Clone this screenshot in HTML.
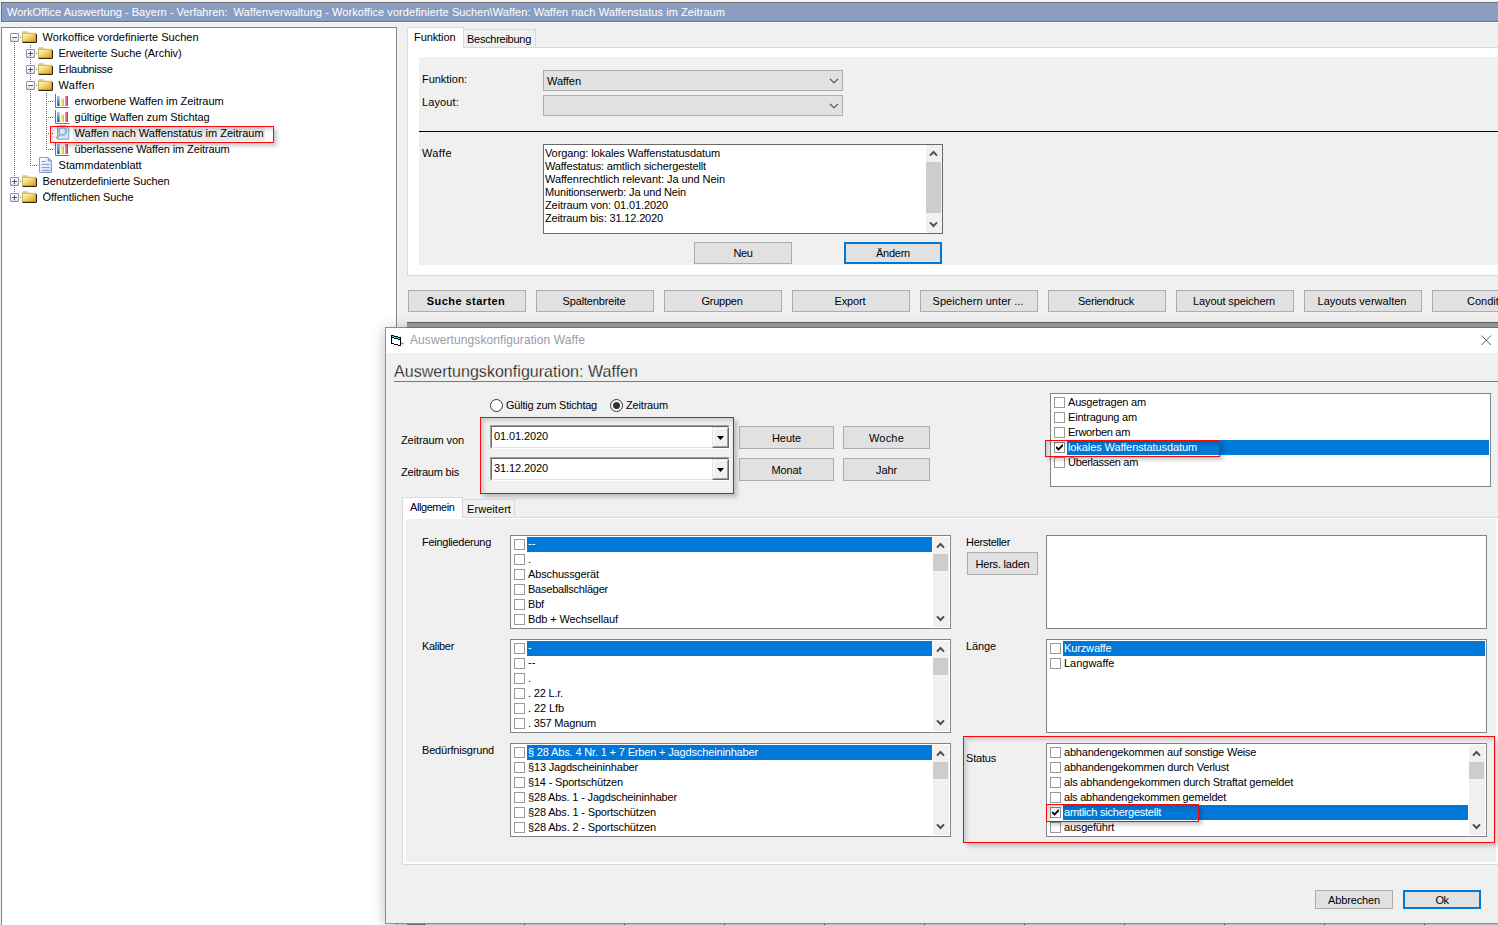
<!DOCTYPE html>
<html><head><meta charset="utf-8"><title>WorkOffice Auswertung</title>
<style>
*{box-sizing:border-box;margin:0;padding:0}
html,body{width:1498px;height:925px;overflow:hidden;background:#f0f0f0}
body{font-family:"Liberation Sans",sans-serif;font-size:11px;color:#000;position:relative}
.a{position:absolute}
.t{position:absolute;white-space:nowrap;line-height:13px;height:13px}
.ms{letter-spacing:-0.2px}
.btn{position:absolute;background:#e1e1e1;border:1px solid #adadad;text-align:center;white-space:nowrap}
.btn span{position:absolute;left:0;right:0;text-align:center;line-height:13px}
.def{border:2px solid #0078d7}
.lb{position:absolute;background:#fff;border:1px solid #7f848d}
.cb{position:absolute;width:11px;height:11px;border:1px solid #9a9a9a;background:#fff}
.cbk{border-color:#8c8c8c}
.row{position:absolute;white-space:nowrap;line-height:13px;height:13px;letter-spacing:-0.2px}
.sel{position:absolute;background:#0078d7;height:15px}
.w{color:#fff}
.sb{position:absolute;width:16px;background:#f0f0f0}
.thumb{position:absolute;left:0;width:15px;background:#cdcdcd}
.red{position:absolute;border:1px solid #fa070b;box-shadow:2.5px 2.5px 4px rgba(0,0,0,.21),inset 2.5px 2.5px 4px rgba(0,0,0,.17)}
.vd{position:absolute;width:1px;background-image:linear-gradient(#666 50%,transparent 50%);background-size:1px 2px}
.hd{position:absolute;height:1px;background-image:linear-gradient(90deg,#666 50%,transparent 50%);background-size:2px 1px}
.pm{position:absolute;width:9px;height:9px;border:1px solid #919191;border-radius:1px;background:linear-gradient(#fff,#fff 45%,#d9d9d9)}
.pm i{position:absolute;left:1px;top:3px;width:5px;height:1px;background:#3c55a5}
.pm b{position:absolute;left:3px;top:1px;width:1px;height:5px;background:#3c55a5}
</style></head><body>
<svg width="0" height="0" style="position:absolute">
<defs>
<linearGradient id="fg" x1="0" y1="0" x2="1" y2="1"><stop offset="0" stop-color="#fffad2"/><stop offset=".4" stop-color="#fbdb74"/><stop offset="1" stop-color="#dc9a18"/></linearGradient>
<linearGradient id="dg" x1="0" y1="0" x2="0" y2="1"><stop offset="0" stop-color="#ffffff"/><stop offset="1" stop-color="#c9dcf5"/></linearGradient>
<radialGradient id="lg" cx=".4" cy=".4" r=".6"><stop offset="0" stop-color="#ffffff"/><stop offset="1" stop-color="#a8d8f0"/></radialGradient>
<symbol id="folder" viewBox="0 0 15 12">
<path d="M1 .7h4.3l1 1.5H1z" fill="#fbeeae" stroke="#cdb469" stroke-width=".7"/>
<rect x=".5" y="2.2" width="13.2" height="8.6" fill="url(#fg)" stroke="#c29a3a" stroke-width=".7"/>
<path d="M.6 11.4h13.8V3" fill="none" stroke="#1a1408" stroke-width="1"/>
</symbol>
<symbol id="chart" viewBox="0 0 15 14">
<linearGradient id="cb" x1="0" y1="0" x2="0" y2="1"><stop offset="0" stop-color="#9ccdf8"/><stop offset=".55" stop-color="#4a93e0"/><stop offset="1" stop-color="#1f62b8"/></linearGradient>
<linearGradient id="cy" x1="0" y1="0" x2="1" y2="0"><stop offset="0" stop-color="#fbf08a"/><stop offset=".6" stop-color="#f2d94c"/><stop offset="1" stop-color="#c9962c"/></linearGradient>
<linearGradient id="cr" x1="0" y1="0" x2="1" y2="0"><stop offset="0" stop-color="#f4a3b0"/><stop offset=".5" stop-color="#e0647a"/><stop offset="1" stop-color="#b8304c"/></linearGradient>
<path d="M.5 0v13.5h14" fill="none" stroke="#3f7fd0" stroke-width="1"/>
<rect x="2" y="2" width="2.7" height="10" fill="url(#cb)"/>
<rect x="5.9" y="4.6" width="2.9" height="7.4" fill="url(#cy)"/>
<rect x="10" y="2" width="3" height="10" fill="url(#cr)"/>
</symbol>
<symbol id="doc" viewBox="0 0 13 16">
<linearGradient id="dg2" x1="0" y1="0" x2="1" y2="1"><stop offset="0" stop-color="#ffffff"/><stop offset=".5" stop-color="#e6effc"/><stop offset="1" stop-color="#b9d4f5"/></linearGradient>
<path d="M.5.5h8.5l3.5 3.5v11.5H.5z" fill="url(#dg2)" stroke="#8a98d4" stroke-width="1"/>
<path d="M9 .5v3.5h3.5z" fill="#7fb4f0" stroke="#8a98d4" stroke-width=".6"/>
<path d="M2.5 4.5h4.5M2.5 7.5h8M2.5 10.5h8M2.5 13.5h8" stroke="#8f9cd6" stroke-width="1"/>
</symbol>
<symbol id="mag" viewBox="0 0 15 16">
<path d="M2.5.8h8.5l2.8 2.8v10.6H2.5z" fill="#d5e3fa" stroke="#7f9fd8" stroke-width="1"/>
<circle cx="7.6" cy="6.4" r="3.7" fill="url(#lg)" stroke="#7d9ccf" stroke-width="1.1"/>
<path d="M1.6 12.6L4.4 10.3" stroke="#e0953c" stroke-width="1.5" stroke-linecap="round"/>
</symbol>
</defs></svg>
<div class="a" style="left:1px;top:2px;width:1500px;height:20px;background:#8b9ec2;border:1px solid #707070"></div>
<div class="a" style="left:0;top:22px;width:1498px;height:1px;background:#fafafa"></div>
<div class="a" style="left:0;top:0;width:1498px;height:1px;background:#f7f7f7"></div>
<div class="t" style="left:7px;top:6px;letter-spacing:0.019px;color:#fff;">WorkOffice Auswertung - Bayern - Verfahren:</div>
<div class="t" style="left:233.5px;top:6px;letter-spacing:0.068px;color:#fff;">Waffenverwaltung - Workoffice vordefinierte Suchen\Waffen: Waffen nach Waffenstatus im Zeitraum</div>
<div class="a" style="left:1px;top:27px;width:396px;height:900px;background:#fff;border:1px solid #828790"></div>
<div class="vd" style="left:14px;top:43px;height:155px"></div>
<div class="vd" style="left:30px;top:45px;height:121px"></div>
<div class="vd" style="left:46px;top:93px;height:57px"></div>
<div class="hd" style="left:20px;top:37px;width:1px"></div>
<div class="pm" style="left:10px;top:33px"><i></i></div>
<svg class="a" style="left:22px;top:31px" width="15" height="12"><use href="#folder"/></svg>
<div class="t" style="left:42.6px;top:31px;letter-spacing:0.016px;">Workoffice vordefinierte Suchen</div>
<div class="hd" style="left:36px;top:53px;width:1px"></div>
<div class="pm" style="left:26px;top:49px"><i></i><b></b></div>
<svg class="a" style="left:38px;top:47px" width="15" height="12"><use href="#folder"/></svg>
<div class="t" style="left:58.6px;top:47px;letter-spacing:-0.069px;">Erweiterte Suche (Archiv)</div>
<div class="hd" style="left:36px;top:69px;width:1px"></div>
<div class="pm" style="left:26px;top:65px"><i></i><b></b></div>
<svg class="a" style="left:38px;top:63px" width="15" height="12"><use href="#folder"/></svg>
<div class="t" style="left:58.6px;top:63px;letter-spacing:-0.317px;">Erlaubnisse</div>
<div class="hd" style="left:36px;top:85px;width:1px"></div>
<div class="pm" style="left:26px;top:81px"><i></i></div>
<svg class="a" style="left:38px;top:79px" width="15" height="12"><use href="#folder"/></svg>
<div class="t" style="left:58.6px;top:79px;letter-spacing:0.292px;">Waffen</div>
<div class="hd" style="left:46px;top:101px;width:8px"></div>
<svg class="a" style="left:55px;top:94px" width="15" height="14"><use href="#chart"/></svg>
<div class="t" style="left:74.6px;top:95px;letter-spacing:-0.050px;">erworbene Waffen im Zeitraum</div>
<div class="hd" style="left:46px;top:117px;width:8px"></div>
<svg class="a" style="left:55px;top:110px" width="15" height="14"><use href="#chart"/></svg>
<div class="t" style="left:74.6px;top:111px;letter-spacing:-0.050px;">gültige Waffen zum Stichtag</div>
<div class="hd" style="left:46px;top:133px;width:8px"></div>
<div class="a" style="left:73px;top:127px;width:192px;height:14px;background:#e9e9e9"></div>
<svg class="a" style="left:55px;top:125px" width="15" height="16"><use href="#mag"/></svg>
<div class="t" style="left:74.6px;top:127px;letter-spacing:0.002px;">Waffen nach Waffenstatus im Zeitraum</div>
<div class="hd" style="left:46px;top:149px;width:8px"></div>
<svg class="a" style="left:55px;top:142px" width="15" height="14"><use href="#chart"/></svg>
<div class="t" style="left:74.6px;top:143px;letter-spacing:-0.112px;">überlassene Waffen im Zeitraum</div>
<div class="hd" style="left:30px;top:165px;width:8px"></div>
<svg class="a" style="left:39px;top:157px" width="13" height="16"><use href="#doc"/></svg>
<div class="t" style="left:58.6px;top:159px;letter-spacing:-0.010px;">Stammdatenblatt</div>
<div class="hd" style="left:20px;top:181px;width:1px"></div>
<div class="pm" style="left:10px;top:177px"><i></i><b></b></div>
<svg class="a" style="left:22px;top:175px" width="15" height="12"><use href="#folder"/></svg>
<div class="t" style="left:42.6px;top:175px;letter-spacing:-0.106px;">Benutzerdefinierte Suchen</div>
<div class="hd" style="left:20px;top:197px;width:1px"></div>
<div class="pm" style="left:10px;top:193px"><i></i><b></b></div>
<svg class="a" style="left:22px;top:191px" width="15" height="12"><use href="#folder"/></svg>
<div class="t" style="left:42.6px;top:191px;letter-spacing:-0.097px;">Öffentlichen Suche</div>
<div class="red" style="left:50px;top:126px;width:224px;height:17px"></div>
<div class="a" style="left:407px;top:47px;width:1100px;height:229px;background:#fff;border:1px solid #d9d9d9"></div>
<div class="a" style="left:419px;top:57px;width:1100px;height:208px;background:#f0f0f0"></div>
<div class="a" style="left:463px;top:29px;width:73px;height:19px;background:#f0f0f0;border:1px solid #d9d9d9"></div>
<div class="a" style="left:407px;top:27px;width:57px;height:21px;background:#fff;border:1px solid #d9d9d9;border-bottom:none"></div>
<div class="t" style="left:414px;top:31px;letter-spacing:-0.088px;">Funktion</div>
<div class="t" style="left:467px;top:33px;letter-spacing:-0.273px;">Beschreibung</div>
<div class="t" style="left:422px;top:73px;letter-spacing:-0.028px;">Funktion:</div>
<div class="t" style="left:422px;top:96px;letter-spacing:0.129px;">Layout:</div>
<div class="t" style="left:422px;top:147px;letter-spacing:0.375px;">Waffe</div>
<div class="a" style="left:543px;top:70px;width:300px;height:21px;background:#e1e1e1;border:1px solid #adadad"><svg class="a" style="right:3px;top:7px" width="10" height="6"><path d="M1 .8L5 4.8L9 .8" fill="none" stroke="#444" stroke-width="1.1"/></svg></div>
<div class="a" style="left:543px;top:95px;width:300px;height:21px;background:#e1e1e1;border:1px solid #adadad"><svg class="a" style="right:3px;top:7px" width="10" height="6"><path d="M1 .8L5 4.8L9 .8" fill="none" stroke="#444" stroke-width="1.1"/></svg></div>
<div class="t" style="left:547px;top:75px;letter-spacing:-0.042px;">Waffen</div>
<div class="a" style="left:419px;top:131px;width:1100px;height:1px;background:#000"></div>
<div class="lb" style="left:543px;top:144px;width:400px;height:90px;border-color:#6a6a6a"></div>
<div class="t" style="left:545px;top:147px;letter-spacing:-0.105px;">Vorgang: lokales Waffenstatusdatum</div>
<div class="t" style="left:545px;top:160px;letter-spacing:-0.134px;">Waffestatus: amtlich sichergestellt</div>
<div class="t" style="left:545px;top:173px;letter-spacing:-0.060px;">Waffenrechtlich relevant: Ja und Nein</div>
<div class="t" style="left:545px;top:186px;letter-spacing:-0.162px;">Munitionserwerb: Ja und Nein</div>
<div class="t" style="left:545px;top:199px;letter-spacing:-0.098px;">Zeitraum von: 01.01.2020</div>
<div class="t" style="left:545px;top:212px;letter-spacing:-0.154px;">Zeitraum bis: 31.12.2020</div>
<div class="sb" style="left:926px;top:145px;height:88px"><div class="thumb" style="top:17px;height:51px"></div><svg class="a" style="left:3px;top:5px" width="9" height="7"><path d="M1 5.6L4.5 2L8 5.6" fill="none" stroke="#4f4f4f" stroke-width="2"/></svg><svg class="a" style="left:3px;bottom:5px" width="9" height="7"><path d="M1 1.4L4.5 5L8 1.4" fill="none" stroke="#4f4f4f" stroke-width="2"/></svg></div>
<div class="btn" style="left:694px;top:242px;width:98px;height:22px"><span style="top:4px;letter-spacing:-0.396px;">Neu</span></div>
<div class="btn def" style="left:844px;top:242px;width:98px;height:22px"><span style="top:3px;letter-spacing:-0.247px;">Ändern</span></div>
<div class="btn" style="left:408px;top:290px;width:118px;height:22px"><span style="top:4px;letter-spacing:0.442px;font-weight:bold;left:-2px;">Suche starten</span></div>
<div class="btn" style="left:536px;top:290px;width:118px;height:22px"><span style="top:4px;letter-spacing:-0.141px;left:-2px;">Spaltenbreite</span></div>
<div class="btn" style="left:664px;top:290px;width:118px;height:22px"><span style="top:4px;letter-spacing:-0.259px;left:-2px;">Gruppen</span></div>
<div class="btn" style="left:792px;top:290px;width:118px;height:22px"><span style="top:4px;letter-spacing:-0.133px;left:-2px;">Export</span></div>
<div class="btn" style="left:920px;top:290px;width:118px;height:22px"><span style="top:4px;letter-spacing:0.058px;left:-2px;">Speichern unter ...</span></div>
<div class="btn" style="left:1048px;top:290px;width:118px;height:22px"><span style="top:4px;letter-spacing:-0.246px;left:-2px;">Seriendruck</span></div>
<div class="btn" style="left:1176px;top:290px;width:118px;height:22px"><span style="top:4px;letter-spacing:-0.111px;left:-2px;">Layout speichern</span></div>
<div class="btn" style="left:1304px;top:290px;width:118px;height:22px"><span style="top:4px;letter-spacing:0.019px;left:-2px;">Layouts verwalten</span></div>
<div class="btn" style="left:1432px;top:290px;width:118px;height:22px"><span style="top:4px;text-align:left;left:34px">Conditional</span></div>
<div class="a" style="left:407px;top:923px;width:1100px;height:2px;background:#dcdcdc"></div>
<div class="a" style="left:407px;top:923px;width:18px;height:2px;background:#7a7a7a"></div>
<div class="a" style="left:424px;top:923px;width:1px;height:2px;background:#444"></div>
<div class="a" style="left:524px;top:923px;width:1px;height:2px;background:#444"></div>
<div class="a" style="left:624px;top:923px;width:1px;height:2px;background:#444"></div>
<div class="a" style="left:724px;top:923px;width:1px;height:2px;background:#444"></div>
<div class="a" style="left:824px;top:923px;width:1px;height:2px;background:#444"></div>
<div class="a" style="left:924px;top:923px;width:1px;height:2px;background:#444"></div>
<div class="a" style="left:1024px;top:923px;width:1px;height:2px;background:#444"></div>
<div class="a" style="left:1124px;top:923px;width:1px;height:2px;background:#444"></div>
<div class="a" style="left:1224px;top:923px;width:1px;height:2px;background:#444"></div>
<div class="a" style="left:1324px;top:923px;width:1px;height:2px;background:#444"></div>
<div class="a" style="left:1424px;top:923px;width:1px;height:2px;background:#444"></div>
<div class="a" style="left:385px;top:327px;width:1200px;height:597px;background:#f0f0f0;border:1px solid #8e8e8e;box-shadow:0 2px 13px rgba(0,0,0,.26)"></div>
<div class="a" style="left:386px;top:328px;width:1200px;height:25px;background:#fff"></div>
<div class="a" style="left:407px;top:322px;width:1100px;height:6px;background:linear-gradient(#5e5e5e 0,#5e5e5e 1px,#939393 1px,#939393 5px,#6e6e6e 5px)"></div>
<svg class="a" style="left:391px;top:335px" width="14" height="11" shape-rendering="crispEdges"><g fill="#000"><rect x="0" y="0" width="1" height="9"/><rect x="0" y="0" width="3" height="1"/><rect x="3" y="1" width="4" height="1"/><rect x="7" y="2" width="3" height="1"/><rect x="0" y="2" width="3" height="1"/><rect x="3" y="3" width="4" height="1"/><rect x="7" y="4" width="3" height="1"/><rect x="9" y="2" width="1" height="9"/><rect x="0" y="8" width="3" height="1"/><rect x="3" y="9" width="4" height="1"/><rect x="7" y="10" width="3" height="1"/><rect x="2" y="0" width="1" height="2"/><rect x="6" y="1" width="1" height="2"/></g><g fill="#00f0f8"><rect x="1" y="1" width="2" height="1"/><rect x="3" y="2" width="4" height="1"/><rect x="7" y="3" width="2" height="1"/></g><path d="M10 7L13 8.2L11 10Z" fill="#8a8a8a" shape-rendering="auto"/></svg>
<div class="t" style="left:410px;top:333px;font-size:12px;line-height:15px;height:15px;color:#9a9aa6;letter-spacing:0.096px;">Auswertungskonfiguration Waffe</div>
<svg class="a" style="left:1481px;top:335px" width="11" height="11"><path d="M.5 .5L10 10M10 .5L.5 10" stroke="#666" stroke-width="1"/></svg>
<div class="t" style="left:394px;top:362px;font-size:16px;line-height:20px;height:20px;-webkit-text-stroke:.3px #f0f0f0;letter-spacing:0.037px;">Auswertungskonfiguration: Waffen</div>
<div class="a" style="left:394px;top:381px;width:1200px;height:1px;background:#7a7a7a"></div>
<div class="a" style="left:490px;top:399px;width:13px;height:13px;border:1.25px solid #333;border-radius:50%;background:#fff"></div>
<div class="a" style="left:610px;top:399px;width:13px;height:13px;border:1.25px solid #333;border-radius:50%;background:#fff"><div class="a" style="left:1.75px;top:1.75px;width:7px;height:7px;border-radius:50%;background:#333"></div></div>
<div class="t" style="left:506px;top:399px;letter-spacing:-0.230px;">Gültig zum Stichtag</div>
<div class="t" style="left:626px;top:399px;letter-spacing:-0.176px;">Zeitraum</div>
<div class="t" style="left:401px;top:434px;letter-spacing:-0.100px;">Zeitraum von</div>
<div class="t" style="left:401px;top:466px;letter-spacing:-0.211px;">Zeitraum bis</div>
<div class="a" style="left:490px;top:425px;width:240px;height:24px;background:#fff;border:1px solid;border-color:#a0a0a0 #fff #fff #a0a0a0"><div class="a" style="left:0;top:0;right:0;bottom:0;border:1px solid;border-color:#696969 #e3e3e3 #e3e3e3 #696969"></div><div class="a" style="right:0px;top:1px;width:17px;height:21px;background:#f0f0f0;border:1px solid;border-color:#e3e3e3 #696969 #696969 #e3e3e3"><div class="a" style="left:0;top:0;right:0;bottom:0;border:1px solid;border-color:#fff #a0a0a0 #a0a0a0 #fff"></div><svg class="a" style="left:4px;top:8px" width="7" height="4"><path d="M0 0H7L3.5 4Z" fill="#000"/></svg></div></div>
<div class="t" style="left:494px;top:430px;letter-spacing:-0.106px;">01.01.2020</div>
<div class="a" style="left:490px;top:457px;width:240px;height:24px;background:#fff;border:1px solid;border-color:#a0a0a0 #fff #fff #a0a0a0"><div class="a" style="left:0;top:0;right:0;bottom:0;border:1px solid;border-color:#696969 #e3e3e3 #e3e3e3 #696969"></div><div class="a" style="right:0px;top:1px;width:17px;height:21px;background:#f0f0f0;border:1px solid;border-color:#e3e3e3 #696969 #696969 #e3e3e3"><div class="a" style="left:0;top:0;right:0;bottom:0;border:1px solid;border-color:#fff #a0a0a0 #a0a0a0 #fff"></div><svg class="a" style="left:4px;top:8px" width="7" height="4"><path d="M0 0H7L3.5 4Z" fill="#000"/></svg></div></div>
<div class="t" style="left:494px;top:462px;letter-spacing:-0.106px;">31.12.2020</div>
<div class="btn" style="left:739px;top:426px;width:95px;height:23px"><span style="top:5px;letter-spacing:-0.072px;">Heute</span></div>
<div class="btn" style="left:843px;top:426px;width:87px;height:23px"><span style="top:5px;letter-spacing:0.191px;">Woche</span></div>
<div class="btn" style="left:739px;top:458px;width:95px;height:23px"><span style="top:5px;letter-spacing:-0.116px;">Monat</span></div>
<div class="btn" style="left:843px;top:458px;width:87px;height:23px"><span style="top:5px;letter-spacing:-0.102px;">Jahr</span></div>
<div class="red" style="left:480px;top:417px;width:254px;height:77px"></div>
<div class="lb" style="left:1050px;top:393px;width:441px;height:94px"></div>
<div class="cb" style="left:1054px;top:397px"></div>
<div class="t" style="left:1068px;top:396px;letter-spacing:-0.194px;">Ausgetragen am</div>
<div class="cb" style="left:1054px;top:412px"></div>
<div class="t" style="left:1068px;top:411px;letter-spacing:-0.196px;">Eintragung am</div>
<div class="cb" style="left:1054px;top:427px"></div>
<div class="t" style="left:1068px;top:426px;letter-spacing:-0.311px;">Erworben am</div>
<div class="sel" style="left:1067px;top:440px;width:422px"></div>
<div class="cb cbk" style="left:1054px;top:442px"><svg class="a" style="left:1px;top:1px" width="7" height="7"><path d="M0 3L2.5 5.5L7 1" fill="none" stroke="#000" stroke-width="1.8"/></svg></div>
<div class="t" style="left:1068px;top:441px;letter-spacing:-0.099px;color:#fff;">lokales Waffenstatusdatum</div>
<div class="cb" style="left:1054px;top:457px"></div>
<div class="t" style="left:1068px;top:456px;letter-spacing:-0.306px;">Überlassen am</div>
<div class="red" style="left:1045px;top:440px;width:175px;height:17px"></div>
<div class="a" style="left:402px;top:517px;width:1200px;height:348px;background:#fff;border:1px solid #d9d9d9"></div>
<div class="a" style="left:406px;top:519px;width:1090px;height:343px;background:#f0f0f0"></div>
<div class="a" style="left:462px;top:499px;width:53px;height:19px;background:#f0f0f0;border:1px solid #d9d9d9"></div>
<div class="a" style="left:402px;top:497px;width:61px;height:21px;background:#fff;border:1px solid #d9d9d9;border-bottom:none"></div>
<div class="t" style="left:410px;top:501px;letter-spacing:-0.424px;">Allgemein</div>
<div class="t" style="left:467px;top:503px;letter-spacing:0.066px;">Erweitert</div>
<div class="t" style="left:422px;top:536px;letter-spacing:-0.270px;">Feingliederung</div>
<div class="t" style="left:422px;top:640px;letter-spacing:-0.321px;">Kaliber</div>
<div class="t" style="left:422px;top:744px;letter-spacing:-0.186px;">Bedürfnisgrund</div>
<div class="t" style="left:966px;top:536px;letter-spacing:-0.308px;">Hersteller</div>
<div class="t" style="left:966px;top:640px;letter-spacing:-0.119px;">Länge</div>
<div class="t" style="left:966px;top:752px;letter-spacing:-0.198px;">Status</div>
<div class="btn" style="left:967px;top:552px;width:71px;height:23px"><span style="top:5px;letter-spacing:-0.206px;">Hers. laden</span></div>
<div class="lb" style="left:510px;top:535px;width:441px;height:94px"></div>
<div class="sel" style="left:527px;top:537px;width:405px"></div>
<div class="cb" style="left:514px;top:539px"></div>
<div class="t" style="left:528px;top:537px;color:#fff;">--</div>
<div class="cb" style="left:514px;top:554px"></div>
<div class="t" style="left:528px;top:553px;">.</div>
<div class="cb" style="left:514px;top:569px"></div>
<div class="t" style="left:528px;top:568px;letter-spacing:-0.136px;">Abschussgerät</div>
<div class="cb" style="left:514px;top:584px"></div>
<div class="t" style="left:528px;top:583px;letter-spacing:-0.236px;">Baseballschläger</div>
<div class="cb" style="left:514px;top:599px"></div>
<div class="t" style="left:528px;top:598px;letter-spacing:-0.172px;">Bbf</div>
<div class="cb" style="left:514px;top:614px"></div>
<div class="t" style="left:528px;top:613px;letter-spacing:-0.108px;">Bdb + Wechsellauf</div>
<div class="sb" style="left:933px;top:537px;height:90px"><div class="thumb" style="top:17px;height:17px"></div><svg class="a" style="left:3px;top:5px" width="9" height="7"><path d="M1 5.6L4.5 2L8 5.6" fill="none" stroke="#4f4f4f" stroke-width="2"/></svg><svg class="a" style="left:3px;bottom:5px" width="9" height="7"><path d="M1 1.4L4.5 5L8 1.4" fill="none" stroke="#4f4f4f" stroke-width="2"/></svg></div>
<div class="lb" style="left:510px;top:639px;width:441px;height:94px"></div>
<div class="sel" style="left:527px;top:641px;width:405px"></div>
<div class="cb" style="left:514px;top:643px"></div>
<div class="t" style="left:528px;top:641px;color:#fff;">-</div>
<div class="cb" style="left:514px;top:658px"></div>
<div class="t" style="left:528px;top:656px;">--</div>
<div class="cb" style="left:514px;top:673px"></div>
<div class="t" style="left:528px;top:672px;">.</div>
<div class="cb" style="left:514px;top:688px"></div>
<div class="t" style="left:528px;top:687px;letter-spacing:-0.189px;">. 22 L.r.</div>
<div class="cb" style="left:514px;top:703px"></div>
<div class="t" style="left:528px;top:702px;letter-spacing:-0.088px;">. 22 Lfb</div>
<div class="cb" style="left:514px;top:718px"></div>
<div class="t" style="left:528px;top:717px;letter-spacing:-0.194px;">. 357 Magnum</div>
<div class="sb" style="left:933px;top:641px;height:90px"><div class="thumb" style="top:17px;height:17px"></div><svg class="a" style="left:3px;top:5px" width="9" height="7"><path d="M1 5.6L4.5 2L8 5.6" fill="none" stroke="#4f4f4f" stroke-width="2"/></svg><svg class="a" style="left:3px;bottom:5px" width="9" height="7"><path d="M1 1.4L4.5 5L8 1.4" fill="none" stroke="#4f4f4f" stroke-width="2"/></svg></div>
<div class="lb" style="left:510px;top:743px;width:441px;height:94px"></div>
<div class="sel" style="left:527px;top:745px;width:405px"></div>
<div class="cb" style="left:514px;top:747px"></div>
<div class="t" style="left:528px;top:746px;letter-spacing:-0.155px;color:#fff;">§ 28 Abs. 4 Nr. 1 + 7 Erben + Jagdscheininhaber</div>
<div class="cb" style="left:514px;top:762px"></div>
<div class="t" style="left:528px;top:761px;letter-spacing:-0.179px;">§13 Jagdscheininhaber</div>
<div class="cb" style="left:514px;top:777px"></div>
<div class="t" style="left:528px;top:776px;letter-spacing:-0.182px;">§14 - Sportschützen</div>
<div class="cb" style="left:514px;top:792px"></div>
<div class="t" style="left:528px;top:791px;letter-spacing:-0.170px;">§28 Abs. 1 - Jagdscheininhaber</div>
<div class="cb" style="left:514px;top:807px"></div>
<div class="t" style="left:528px;top:806px;letter-spacing:-0.157px;">§28 Abs. 1 - Sportschützen</div>
<div class="cb" style="left:514px;top:822px"></div>
<div class="t" style="left:528px;top:821px;letter-spacing:-0.157px;">§28 Abs. 2 - Sportschützen</div>
<div class="sb" style="left:933px;top:745px;height:90px"><div class="thumb" style="top:17px;height:17px"></div><svg class="a" style="left:3px;top:5px" width="9" height="7"><path d="M1 5.6L4.5 2L8 5.6" fill="none" stroke="#4f4f4f" stroke-width="2"/></svg><svg class="a" style="left:3px;bottom:5px" width="9" height="7"><path d="M1 1.4L4.5 5L8 1.4" fill="none" stroke="#4f4f4f" stroke-width="2"/></svg></div>
<div class="lb" style="left:1046px;top:535px;width:441px;height:94px"></div>
<div class="lb" style="left:1046px;top:639px;width:441px;height:94px"></div>
<div class="sel" style="left:1063px;top:641px;width:422px"></div>
<div class="cb" style="left:1050px;top:643px"></div>
<div class="t" style="left:1064px;top:642px;letter-spacing:-0.135px;color:#fff;">Kurzwaffe</div>
<div class="cb" style="left:1050px;top:658px"></div>
<div class="t" style="left:1064px;top:657px;letter-spacing:-0.009px;">Langwaffe</div>
<div class="lb" style="left:1046px;top:743px;width:441px;height:94px"></div>
<div class="cb" style="left:1050px;top:747px"></div>
<div class="t" style="left:1064px;top:746px;letter-spacing:-0.196px;">abhandengekommen auf sonstige Weise</div>
<div class="cb" style="left:1050px;top:762px"></div>
<div class="t" style="left:1064px;top:761px;letter-spacing:-0.188px;">abhandengekommen durch Verlust</div>
<div class="cb" style="left:1050px;top:777px"></div>
<div class="t" style="left:1064px;top:776px;letter-spacing:-0.202px;">als abhandengekommen durch Straftat gemeldet</div>
<div class="cb" style="left:1050px;top:792px"></div>
<div class="t" style="left:1064px;top:791px;letter-spacing:-0.234px;">als abhandengekommen gemeldet</div>
<div class="sel" style="left:1063px;top:805px;width:405px"></div>
<div class="cb cbk" style="left:1050px;top:807px"><svg class="a" style="left:1px;top:1px" width="7" height="7"><path d="M0 3L2.5 5.5L7 1" fill="none" stroke="#000" stroke-width="1.8"/></svg></div>
<div class="t" style="left:1064px;top:806px;letter-spacing:-0.232px;color:#fff;">amtlich sichergestellt</div>
<div class="cb" style="left:1050px;top:822px"></div>
<div class="t" style="left:1064px;top:821px;letter-spacing:-0.198px;">ausgeführt</div>
<div class="sb" style="left:1469px;top:745px;height:90px"><div class="thumb" style="top:17px;height:17px"></div><svg class="a" style="left:3px;top:5px" width="9" height="7"><path d="M1 5.6L4.5 2L8 5.6" fill="none" stroke="#4f4f4f" stroke-width="2"/></svg><svg class="a" style="left:3px;bottom:5px" width="9" height="7"><path d="M1 1.4L4.5 5L8 1.4" fill="none" stroke="#4f4f4f" stroke-width="2"/></svg></div>
<div class="red" style="left:1046px;top:804px;width:153px;height:18px"></div>
<div class="red" style="left:963px;top:736px;width:532px;height:107px"></div>
<div class="btn" style="left:1315px;top:890px;width:78px;height:19px"><span style="top:3px;letter-spacing:-0.135px;">Abbrechen</span></div>
<div class="btn def" style="left:1403px;top:890px;width:78px;height:19px"><span style="top:2px;letter-spacing:-0.531px;">Ok</span></div>
</body></html>
